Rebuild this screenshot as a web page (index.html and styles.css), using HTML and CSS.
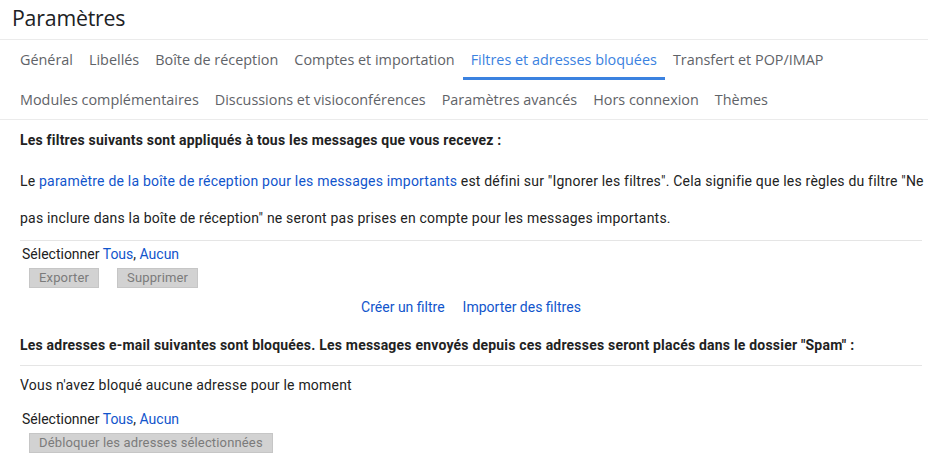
FILE: index.html
```html
<!DOCTYPE html>
<html lang="fr">
<head>
<meta charset="utf-8">
<title>Paramètres</title>
<link rel="stylesheet" href="styles.css">
</head>
<body>
<div class="header"><h1 class="title">Paramètres</h1></div>
<nav class="tabs">
  <div class="tab-row">
    <span class="tab">Général</span>
    <span class="tab">Libellés</span>
    <span class="tab">Boîte de réception</span>
    <span class="tab">Comptes et importation</span>
    <span class="tab active">Filtres et adresses bloquées</span>
    <span class="tab">Transfert et POP/IMAP</span>
  </div>
  <div class="tab-row second">
    <span class="tab">Modules complémentaires</span>
    <span class="tab">Discussions et visioconférences</span>
    <span class="tab">Paramètres avancés</span>
    <span class="tab">Hors connexion</span>
    <span class="tab">Thèmes</span>
  </div>
</nav>
<main class="content">
  <div class="heading">Les filtres suivants sont appliqués à tous les messages que vous recevez :</div>
  <p class="para">Le <a class="link">paramètre de la boîte de réception pour les messages importants</a> est défini sur "Ignorer les filtres". Cela signifie que les règles du filtre "Ne<br>pas inclure dans la boîte de réception" ne seront pas prises en compte pour les messages importants.</p>
  <div class="section">
    <div class="select">Sélectionner <a class="link">Tous</a>, <a class="link">Aucun</a></div>
    <div class="buttons">
      <span class="btn">Exporter</span>
      <span class="btn">Supprimer</span>
    </div>
  </div>
  <div class="actions">
    <a class="link">Créer un filtre</a>
    <a class="link">Importer des filtres</a>
  </div>
  <div class="heading second">Les adresses e-mail suivantes sont bloquées. Les messages envoyés depuis ces adresses seront placés dans le dossier "Spam" :</div>
  <div class="section">
    <div class="empty">Vous n'avez bloqué aucune adresse pour le moment</div>
    <div class="select">Sélectionner <a class="link">Tous</a>, <a class="link">Aucun</a></div>
    <div class="buttons">
      <span class="btn">Débloquer les adresses sélectionnées</span>
    </div>
  </div>
</main>
</body>
</html>
```
FILE: styles.css
```css
* { box-sizing: border-box; }
html, body { margin: 0; padding: 0; background: #fff; }
body {
  font-family: Roboto, "Liberation Sans", Arial, sans-serif;
  color: #222;
  font-size: 14px;
  letter-spacing: 0.2px;
  width: 928px;
  overflow: hidden;
}
.header {
  height: 40px;
  padding-left: 12px;
  border-bottom: 1px solid #ebebeb;
}
.title {
  margin: 0;
  font-family: "Open Sans", Roboto, sans-serif;
  font-weight: 400;
  font-size: 21.3px;
  line-height: 36px;
  color: #202124;
  letter-spacing: -0.2px;
}
.tabs {
  padding-left: 12px;
  border-bottom: 1px solid #ebebeb;
}
.tab-row {
  display: flex;
  height: 40px;
}
.tab-row.second { height: 39px; }
.tab {
  padding: 0 8px;
  line-height: 40px;
  font-family: "Open Sans", Roboto, sans-serif;
  font-size: 14.4px;
  font-weight: 500;
  color: #5f6368;
  white-space: nowrap;
  letter-spacing: 0;
}
.tab.active {
  color: #3b82e0;
  box-shadow: inset 0 -3px 0 #3b82e0;
}
.content {
  padding: 0 6px 0 20px;
}
.heading {
  font-weight: 700;
  font-size: 14px;
  line-height: 40px;
  color: #222;
  white-space: nowrap;
  letter-spacing: 0.2px;
}
.heading.second { margin-top: 8px; }
.para {
  margin: 3px 0 0;
  line-height: 37px;
  white-space: nowrap;
  height: 77px;
}
.link {
  color: #15c;
  text-decoration: none;
  cursor: pointer;
}
.section {
  border-top: 1px solid #e5e5e5;
}
.select {
  padding-left: 2px;
  padding-top: 3px;
  line-height: 20px;
  font-size: 14px;
  letter-spacing: 0;
}
.buttons {
  display: flex;
  gap: 18px;
  margin-top: 4px;
  padding-left: 9px;
}
.btn {
  display: inline-block;
  height: 20px;
  line-height: 18px;
  padding: 0 9px;
  font-size: 13px;
  letter-spacing: 0.15px;
  color: #7b7b7b;
  background: #d2d2d2;
  border: 1px solid #c6c6c6;
}
.actions {
  display: flex;
  justify-content: center;
  gap: 18px;
  margin-top: 9px;
  line-height: 20px;
  letter-spacing: 0;
}
.empty {
  line-height: 38px;
}
.section .empty + .select { padding-top: 5px; }
```
